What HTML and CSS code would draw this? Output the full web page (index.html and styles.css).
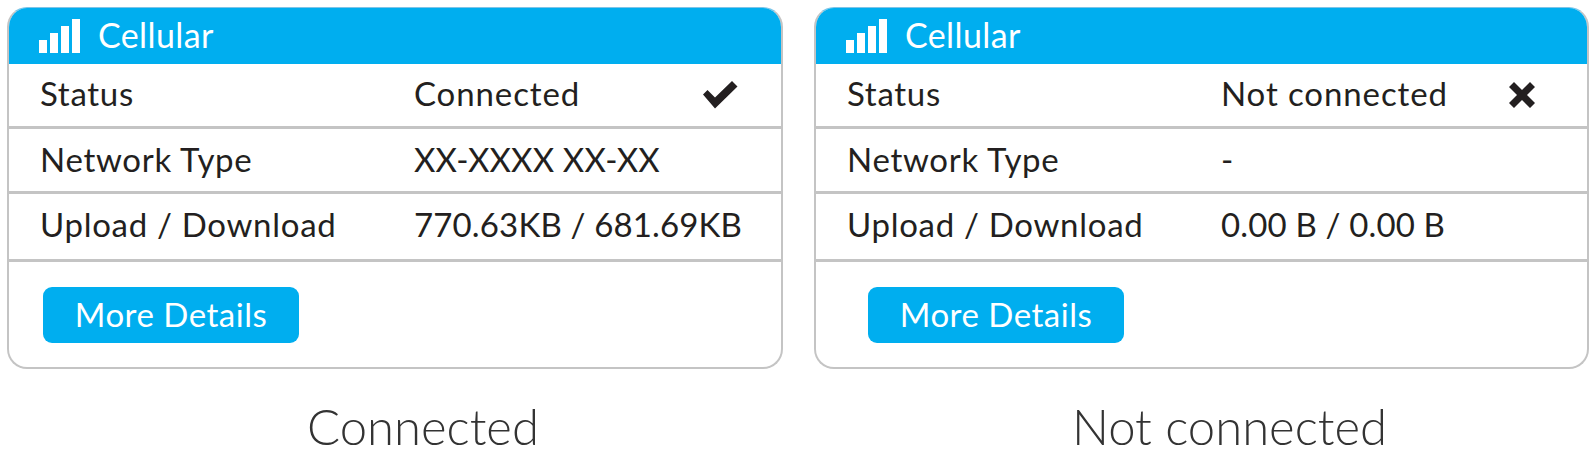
FILE: index.html
```html
<!DOCTYPE html>
<html lang="en">
<head>
<meta charset="utf-8">
<title>Cellular</title>
<link rel="stylesheet" href="styles.css">
</head>
<body>
<main class="page">
  <figure class="panel">
    <section class="card">
      <header class="card-head">
        <svg class="bars" width="42" height="34" viewBox="0 0 42 34"><path d="M0 21h8v13H0zM11 14h8v20h-8zM22 7h8v27h-8zM33 0h8v34h-8z" fill="#fff"/></svg>
        <span>Cellular</span>
      </header>
      <div class="row row-first"><span class="label">Status</span><span class="value word">Connected</span>
        <svg class="icon icon-check" width="36" height="28" viewBox="0 0 36 28"><path d="M1 13.5 5.5 9l7.500 7.500L30 0l5.500 5.500L13 27.500z" fill="#231f20"/></svg>
      </div>
      <div class="row row-mid"><span class="label">Network Type</span><span class="value num">XX-XXXX XX-XX</span></div>
      <div class="row row-last"><span class="label">Upload / Download</span><span class="value num">770.63KB / 681.69KB</span></div>
      <div class="foot"><a class="btn">More Details</a></div>
    </section>
    <figcaption class="caption">Connected</figcaption>
  </figure>
  <figure class="panel panel-second">
    <section class="card">
      <header class="card-head">
        <svg class="bars" width="42" height="34" viewBox="0 0 42 34"><path d="M0 21h8v13H0zM11 14h8v20h-8zM22 7h8v27h-8zM33 0h8v34h-8z" fill="#fff"/></svg>
        <span>Cellular</span>
      </header>
      <div class="row row-first"><span class="label">Status</span><span class="value word">Not connected</span>
        <svg class="icon icon-x" width="26" height="26" viewBox="0 0 26 26"><path d="M5 0l8 8 8-8 5 5-8 8 8 8-5 5-8-8-8 8-5-5 8-8-8-8z" fill="#231f20"/></svg>
      </div>
      <div class="row row-mid"><span class="label">Network Type</span><span class="value num">-</span></div>
      <div class="row row-last"><span class="label">Upload / Download</span><span class="value num">0.00 B / 0.00 B</span></div>
      <div class="foot foot-wide"><a class="btn">More Details</a></div>
    </section>
    <figcaption class="caption">Not connected</figcaption>
  </figure>
</main>
</body>
</html>
```
FILE: styles.css
```css
* { box-sizing: border-box; }
html, body { margin: 0; background: #fff; }
body { font-family: Lato, "Noto Sans", sans-serif; color: #231f20; }
.page {
  display: grid;
  grid-template-columns: 776px 775px;
  column-gap: 31px;
  padding: 7px 0 0 7px;
}
.panel { margin: 0; }
.card {
  height: 362px;
  border: 2px solid #c4c4c4;
  border-top: 1px solid #7fc4e6;
  border-radius: 20px;
  overflow: hidden;
  background: #fff;
}
.card-head {
  height: 56px;
  margin: 0 -2px;
  padding: 0 0 3px 32px;
  display: flex;
  align-items: center;
  gap: 17px;
  background: #00aeef;
  color: #fff;
  font-size: 34px;
  letter-spacing: 0.4px;
}
.bars { margin-top: 2px; }
.row {
  height: 65px;
  display: flex;
  align-items: center;
  padding-left: 31px;
  border-bottom: 3px solid #c4c4c4;
  font-size: 33px;
  letter-spacing: 0.7px;
}
.row-first { height: 65px; padding-bottom: 5px; }
.row-mid { padding-bottom: 2px; }
.row-last { height: 68px; padding-bottom: 5px; }
.label { width: 374px; }
.word { letter-spacing: 0.9px; }
.num { letter-spacing: 0.15px; }
.icon { margin-left: auto; }
.icon-check { margin-right: 43px; margin-top: 5px; }
.icon-x { margin-right: 52px; margin-top: 5px; }
.foot { padding: 25px 0 0 34px; }
.foot-wide { padding-left: 52px; }
.btn {
  display: flex;
  width: 256px;
  height: 56px;
  padding-bottom: 2px;
  align-items: center;
  justify-content: center;
  border-radius: 9px;
  background: #00aeef;
  color: #fff;
  font-size: 33px;
  letter-spacing: 0.5px;
}
.caption {
  padding: 29px 0 0 56px;
  text-align: center;
  font-size: 49px;
  font-weight: 300;
  line-height: 56px;
  color: #333;
}
```
